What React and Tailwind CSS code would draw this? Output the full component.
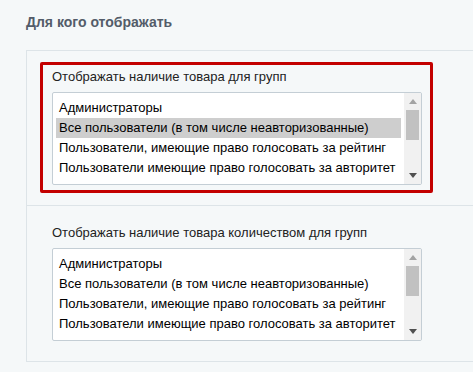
import React from 'react';

const groups = [
  'Администраторы',
  'Все пользователи (в том числе неавторизованные)',
  'Пользователи, имеющие право голосовать за рейтинг',
  'Пользователи имеющие право голосовать за авторитет',
];

const GroupList = ({ selected }) => (
  <div className="flex h-[93px] w-[370px] overflow-hidden rounded-[2px] border border-[#c4ced5] bg-white">
    <div className="flex-1 overflow-hidden px-[3px] pt-[5px]">
      {groups.map((name, i) => (
        <div
          key={name}
          className={`h-[20px] whitespace-nowrap px-[3px] text-[13px] leading-[20px] text-black ${
            i === selected ? 'bg-[#cecece]' : ''
          }`}
        >
          {name}
        </div>
      ))}
    </div>
    <div className="flex w-[17px] flex-col items-center bg-[#f1f1f1]">
      <div className="flex h-[17px] w-full items-center justify-center">
        <svg width="8" height="5" viewBox="0 0 8 5">
          <path d="M4 0 L8 5 L0 5 Z" fill="#a3a3a3" />
        </svg>
      </div>
      <div className="h-[30px] w-[13px] bg-[#c1c1c1]" />
      <div className="flex-1" />
      <div className="flex h-[17px] w-full items-center justify-center">
        <svg width="8" height="5" viewBox="0 0 8 5">
          <path d="M0 0 L8 0 L4 5 Z" fill="#505050" />
        </svg>
      </div>
    </div>
  </div>
);

const FieldGroup = ({ label, selected, marked }) => (
  <div
    className={`w-[393px] rounded-[2px] border-[3px] pb-[5px] pl-[9px] pr-[8px] pt-[4px] ${
      marked ? 'border-[#c30000]' : 'border-transparent'
    }`}
  >
    <div className="mb-[7px] h-[16px] text-[13px] leading-[16px] text-[#222]">{label}</div>
    <GroupList selected={selected} />
  </div>
);

export default function App() {
  return (
    <div className="h-[372px] w-[473px] overflow-hidden bg-[#f5f8f9] font-['Liberation_Sans',Arial,sans-serif]">
      <div className="pl-[26px] pt-[13px]">
        <h2 className="h-[18px] text-[14px] font-bold leading-[18px] text-[#535c69]">Для кого отображать</h2>
        <div className="mt-[19px] w-[520px]">
          <div className="border border-[#dde4e8] px-[13px] pb-[12px] pt-[11px]">
            <FieldGroup label="Отображать наличие товара для групп" selected={1} marked />
          </div>
          <div className="border border-t-0 border-[#dde4e8] px-[13px] pb-[12px] pt-[12px]">
            <FieldGroup label="Отображать наличие товара количеством для групп" selected={-1} />
          </div>
        </div>
      </div>
    </div>
  );
}
